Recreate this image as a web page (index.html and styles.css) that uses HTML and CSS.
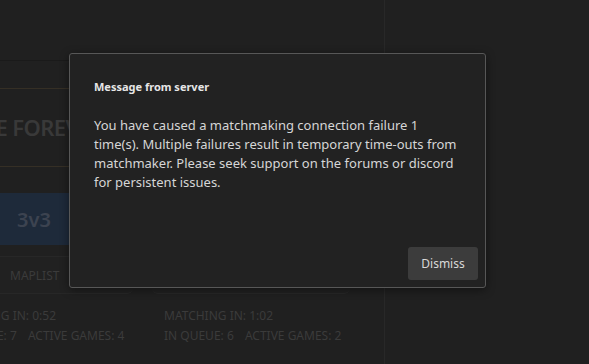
FILE: index.html
```html
<!DOCTYPE html>
<html lang="en">
<head>
    <meta charset="UTF-8">
    <meta name="viewport" content="width=device-width, initial-scale=1.0">
    <title>Matchmaking</title>
    <link rel="stylesheet" href="styles.css">
</head>
<body>

<div class="app">
    <div class="lobby">
        <div class="topbar"></div>

        <div class="lobby-inner">
            <div class="event-title">
                <h2>ONE FOREVER WAR</h2>
            </div>

            <div class="queues">
                <div class="queue">
                    <div class="mode-tab">3v3</div>
                    <div class="queue-card">
                        <span class="card-link">Maplist</span>
                    </div>
                    <div class="queue-stats">
                        <p>Matching in: 0:52</p>
                        <p>In queue: 7 <span class="gap">Active games: 4</span></p>
                    </div>
                </div>
                <div class="queue">
                    <div class="mode-tab">2v2</div>
                    <div class="queue-card">
                        <span class="card-link">Maplist</span>
                    </div>
                    <div class="queue-stats">
                        <p>Matching in: 1:02</p>
                        <p>In queue: 6 <span class="gap">Active games: 2</span></p>
                    </div>
                </div>
            </div>
        </div>
    </div>

    <div class="sidebar"></div>
</div>

<div class="modal">
    <h3>Message from server</h3>
    <p class="modal-text">You have caused a matchmaking connection failure 1 time(s). Multiple failures result in temporary time-outs from matchmaker. Please seek support on the forums or discord for persistent issues.</p>
    <div class="modal-actions">
        <button class="btn">Dismiss</button>
    </div>
</div>

</body>
</html>
```

FILE: styles.css
```css
body {
    margin: 0;
    width: 589px;
    height: 364px;
    overflow: hidden;
    background-color: #202020;
    font-family: "Noto Sans", "Open Sans", sans-serif;
    position: relative;
}

.app {
    display: flex;
    height: 364px;
}

.lobby {
    width: 384px;
    flex-shrink: 0;
    border-right: 1px solid #282828;
    overflow: hidden;
}

.topbar {
    height: 60px;
    border-bottom: 1px solid #1a1a1a;
}

.lobby-inner {
    margin-left: -65px;
    width: 460px;
}

.event-title {
    margin-top: 27px;
    height: 77px;
    border-top: 1px solid #352f25;
    border-bottom: 1px solid #352f25;
    display: flex;
    align-items: center;
}

.event-title h2 {
    margin: 0 0 2px 27px;
    font-size: 22px;
    font-weight: 600;
    letter-spacing: -0.6px;
    color: #393939;
    white-space: nowrap;
}

.queues {
    display: flex;
    gap: 19px;
    margin-top: 26px;
}

.queue {
    width: 198px;
}

.mode-tab {
    height: 52px;
    background-color: #1e2a3a;
    color: #3c4350;
    font-size: 20px;
    font-weight: 600;
    display: flex;
    align-items: center;
    justify-content: center;
}

.queue-card {
    margin-top: 11px;
    height: 36px;
    border-top: 1px solid #272727;
    border-bottom: 1px solid #272727;
    border-radius: 0 0 6px 6px;
    background-color: #212121;
    padding-left: 75px;
    display: flex;
    align-items: center;
}

.card-link {
    font-size: 12px;
    text-transform: uppercase;
    color: #3b3b3b;
}

.queue-stats {
    padding: 12px 0 0 12px;
}

.queue-stats p {
    margin: 0;
    font-size: 12px;
    line-height: 20px;
    text-transform: uppercase;
    color: #3b3b3b;
    white-space: nowrap;
}

.queue-stats .gap {
    margin-left: 8px;
}

.sidebar {
    flex: 1;
}

.modal {
    position: absolute;
    left: 69px;
    top: 53px;
    width: 415px;
    height: 233px;
    background-color: #222222;
    border: 1px solid #575757;
    border-radius: 3px;
    box-shadow: 0 2px 10px rgba(0, 0, 0, 0.45);
    display: flex;
    flex-direction: column;
}

.modal h3 {
    margin: 26px 24px 0 24px;
    font-size: 11px;
    line-height: 14px;
    font-weight: 700;
    color: #e6e6e6;
}

.modal-text {
    margin: 22px 24px 0 24px;
    font-size: 13px;
    line-height: 19px;
    color: #d6d6d6;
}

.modal-actions {
    margin-top: auto;
    display: flex;
    justify-content: flex-end;
    padding: 0 7px 7px 0;
}

.btn {
    width: 70px;
    height: 33px;
    background-color: #3c3c3c;
    color: #d8d8d8;
    border: none;
    border-radius: 3px;
    font-family: "Noto Sans", "Open Sans", sans-serif;
    font-size: 12px;
    cursor: pointer;
}
```
